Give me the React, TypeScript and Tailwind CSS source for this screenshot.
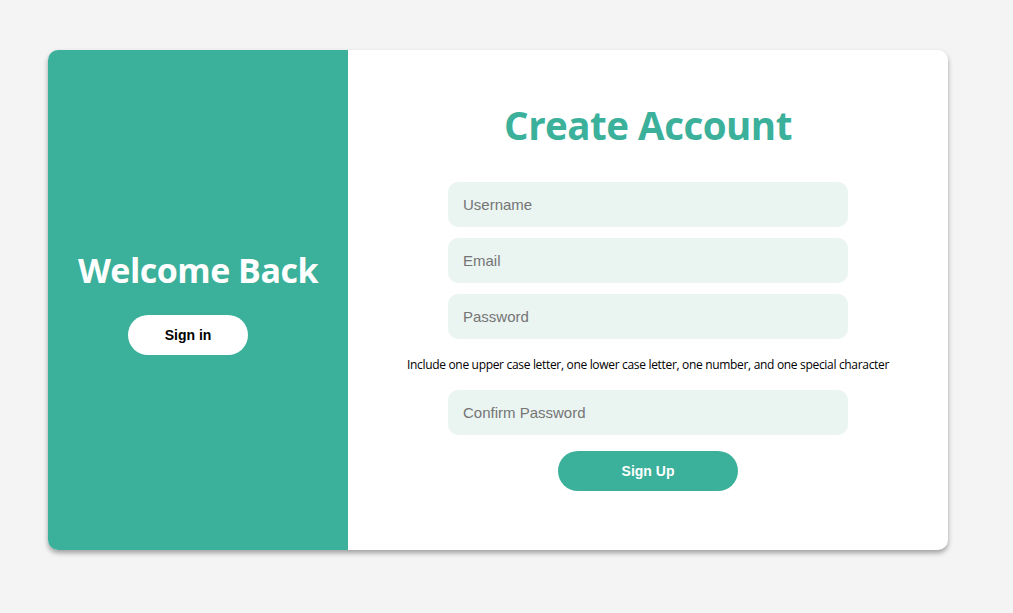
import { useState } from 'react'

const heading = "font-['Open_Sans','Noto_Sans',sans-serif] font-bold"
const field = "w-[400px] h-[45px] px-[15px] rounded-[10px] bg-[#eaf4f1] text-[15px] text-[#333] placeholder:text-[#757575] font-['Liberation_Sans',Arial,sans-serif] focus:outline-none"
const pill = "h-10 rounded-full text-sm font-bold font-['Liberation_Sans',Arial,sans-serif]"

export default function App() {
  const [form, setForm] = useState({ username: '', email: '', password: '', confirm: '' })
  const set = (k: keyof typeof form) => (e: React.ChangeEvent<HTMLInputElement>) =>
    setForm({ ...form, [k]: e.target.value })

  return (
    <div className="min-h-[613px] bg-[#f4f4f4] pt-[50px] pl-[48px]">
      <div className="flex w-[900px] h-[500px] rounded-[10px] overflow-hidden bg-white shadow-[0_3px_5px_rgba(0,0,0,0.35)]">
        {/* Left */}
        <div className="w-[300px] shrink-0 bg-[#3bb09a] flex flex-col items-center justify-center pt-[2px]">
          <h1 className={`${heading} text-white text-[34px] leading-[44px] tracking-[-0.5px]`}>Welcome Back</h1>
          <button className={`${pill} w-[120px] mt-[23px] mr-[20px] bg-white text-black`}>Sign in</button>
        </div>

        {/* Right */}
        <div className="flex-1 flex flex-col items-center pt-[49px]">
          <h1 className={`${heading} text-[#3bb09a] text-[38.5px] leading-[52px] tracking-[-0.5px]`}>Create Account</h1>
          <form className="flex flex-col items-center mt-[31px]" onSubmit={e => e.preventDefault()}>
            <input className={field} placeholder="Username" value={form.username} onChange={set('username')} />
            <input className={`${field} mt-[11px]`} placeholder="Email" value={form.email} onChange={set('email')} />
            <input className={`${field} mt-[11px]`} type="password" placeholder="Password" value={form.password} onChange={set('password')} />
            <p className="text-xs text-black leading-[51px] font-['Open_Sans','Noto_Sans',sans-serif] tracking-[-0.32px]">
              Include one upper case letter, one lower case letter, one number, and one special character
            </p>
            <input className={field} type="password" placeholder="Confirm Password" value={form.confirm} onChange={set('confirm')} />
            <button type="submit" className={`${pill} w-[180px] mt-[16px] bg-[#3bb09a] text-white`}>Sign Up</button>
          </form>
        </div>
      </div>
    </div>
  )
}
